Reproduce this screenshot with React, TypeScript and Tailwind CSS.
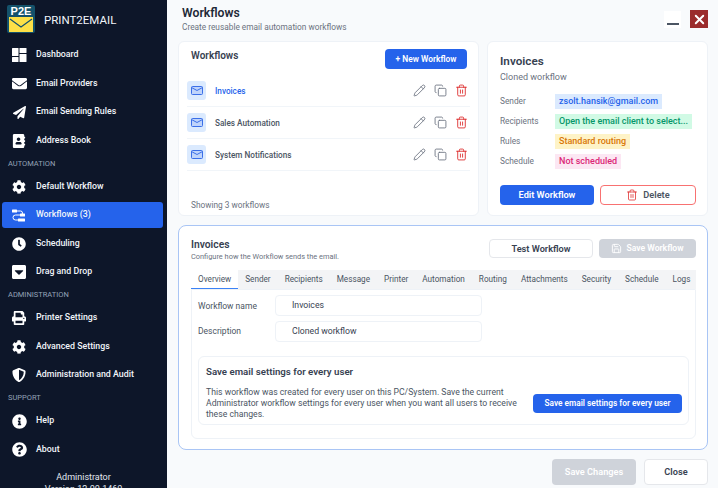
import { ReactNode } from "react";
import {
  FaAddressBook,
  FaCaretSquareDown,
  FaClock,
  FaCog,
  FaEnvelope,
  FaInfoCircle,
  FaPaperPlane,
  FaPrint,
  FaQuestionCircle,
  FaShieldAlt,
} from "react-icons/fa";
import { Copy, Pencil, Save, Trash2, X } from "lucide-react";

const DashboardIcon = () => (
  <svg width="15" height="14" viewBox="0 0 15 14" fill="#fff">
    <rect x="0" y="0" width="6.5" height="8" rx="0.5" />
    <rect x="0" y="9" width="6.5" height="5" rx="0.5" />
    <rect x="7.5" y="0" width="7" height="5" rx="0.5" />
    <rect x="7.5" y="6" width="7" height="8" rx="0.5" />
  </svg>
);

const FlowIcon = () => (
  <svg width="14" height="13" viewBox="0 0 14 13" fill="none">
    <rect x="0" y="0.5" width="5" height="3" rx="0.5" fill="#fff" />
    <rect x="8" y="4.5" width="5" height="3" rx="0.5" fill="#fff" />
    <rect x="6" y="9.5" width="7" height="3" rx="0.5" fill="#fff" />
    <path d="M5 2h3.5a1.5 1.5 0 0 1 0 4H3.5a2 2 0 0 0 0 5H6" stroke="#fff" strokeWidth="1" />
  </svg>
);

const groups: { label?: string; items: { icon: ReactNode; name: string; active?: boolean }[] }[] = [
  {
    items: [
      { icon: <DashboardIcon />, name: "Dashboard" },
      { icon: <FaEnvelope size={15} />, name: "Email Providers" },
      { icon: <FaPaperPlane size={13} />, name: "Email Sending Rules" },
      { icon: <FaAddressBook size={14} />, name: "Address Book" },
    ],
  },
  {
    label: "AUTOMATION",
    items: [
      { icon: <FaCog size={14} />, name: "Default Workflow" },
      { icon: <FlowIcon />, name: "Workflows (3)", active: true },
      { icon: <FaClock size={14} />, name: "Scheduling" },
      { icon: <FaCaretSquareDown size={16} />, name: "Drag and Drop" },
    ],
  },
  {
    label: "ADMINISTRATION",
    items: [
      { icon: <FaPrint size={14} />, name: "Printer Settings" },
      { icon: <FaCog size={14} />, name: "Advanced Settings" },
      { icon: <FaShieldAlt size={14} />, name: "Administration and Audit" },
    ],
  },
  {
    label: "SUPPORT",
    items: [
      { icon: <FaInfoCircle size={15} />, name: "Help" },
      { icon: <FaQuestionCircle size={15} />, name: "About" },
    ],
  },
];

const workflows = ["Invoices", "Sales Automation", "System Notifications"];

const details = [
  { label: "Sender", value: "zsolt.hansik@gmail.com", cls: "bg-[#dbeafe] text-[#2563eb]" },
  { label: "Recipients", value: "Open the email client to select...", cls: "bg-[#d1fae5] text-[#059669]" },
  { label: "Rules", value: "Standard routing", cls: "bg-[#fef3c7] text-[#d97706]" },
  { label: "Schedule", value: "Not scheduled", cls: "bg-[#fce7f3] text-[#db2777]" },
];

const tabs = ["Overview", "Sender", "Recipients", "Message", "Printer", "Automation", "Routing", "Attachments", "Security", "Schedule", "Logs"];

const Sidebar = () => (
  <aside className="w-[167px] h-[488px] shrink-0 overflow-hidden bg-[#0d1629] text-[#f1f5f9] flex flex-col">
    <div className="h-[38px] shrink-0 flex items-center pl-[7px] gap-[9px]">
      <div className="w-[28px] h-[28px] rounded-[2px] bg-[#14526b] flex flex-col items-center overflow-hidden">
        <span className="text-[11px] leading-[12px] font-bold text-white font-['Liberation_Sans',sans-serif]">P2E</span>
        <svg width="24" height="15" viewBox="0 0 24 15">
          <rect width="24" height="15" fill="#fde047" />
          <path d="M1 2l11 8 11-8" stroke="#14526b" strokeWidth="1.2" fill="none" />
        </svg>
      </div>
      <span className="text-[11.5px] pt-[4px]">PRINT2EMAIL</span>
    </div>
    <nav className="shrink-0 flex flex-col gap-[2.5px] pt-[4px]">
      {groups.map((g) => (
        <div key={g.label ?? "main"} className="flex flex-col gap-[2.5px]">
          {g.label && (
            <div className="h-[15px] flex items-center pl-[8px] text-[7.5px] text-[#94a3b8]">{g.label}</div>
          )}
          {g.items.map((item) => (
            <div
              key={item.name}
              className={`h-[26px] ml-[2px] mr-[4px] rounded-[3px] flex items-center ${item.active ? "bg-[#2563eb]" : ""}`}
            >
              <span className="w-[34px] flex justify-center text-white shrink-0">{item.icon}</span>
              <span className="text-[8.8px] font-medium whitespace-nowrap">{item.name}</span>
            </div>
          ))}
        </div>
      ))}
    </nav>
    <div className="shrink-0 pt-[8px] text-center text-[9px] leading-[12px] text-[#e2e8f0]">
      <div>Administrator</div>
      <div>Version 12.00.1460</div>
    </div>
  </aside>
);

const WorkflowList = () => (
  <section className="w-[301px] h-[175px] bg-white rounded-[6px] border border-[#eef2f7] px-[8px] flex flex-col">
    <div className="flex items-start justify-between pl-[4px] pr-[3px] pt-[7px] h-[28px]">
      <h2 className="text-[10px] leading-[14px] font-semibold text-[#374151]">Workflows</h2>
      <button className="w-[82px] h-[20px] rounded-[4px] bg-[#2563eb] text-white text-[8.4px] font-semibold">
        + New Workflow
      </button>
    </div>
    <div className="mt-[5px]">
      {workflows.map((w, i) => (
        <div key={w} className="h-[32px] border-b border-[#f1f5f9] flex items-center">
          <span className="w-[19px] h-[19px] rounded-[3px] bg-[#dbeafe] flex items-center justify-center">
            <svg width="12" height="9" viewBox="0 0 12 9" fill="none" stroke="#3b6fe8">
              <rect x="0.5" y="0.5" width="11" height="8" rx="1" fill="#bfd4fb" />
              <path d="M0.5 1.5l5.5 3 5.5-3" />
            </svg>
          </span>
          <span className={`ml-[9px] pt-[1px] text-[8.2px] font-medium ${i === 0 ? "text-[#2563eb]" : "text-[#4b5563]"}`}>{w}</span>
          <span className="ml-auto mr-[2px] flex items-center gap-[8px]">
            <Pencil size={13} strokeWidth={1.6} className="text-[#6b7280]" />
            <Copy size={13} strokeWidth={1.6} className="text-[#6b7280]" />
            <Trash2 size={13} strokeWidth={1.6} className="text-[#dc2626]" />
          </span>
        </div>
      ))}
    </div>
    <p className="mt-auto mb-[4px] pl-[4px] text-[8.3px] text-[#6b7280]">Showing 3 workflows</p>
  </section>
);

const WorkflowDetails = () => (
  <section className="flex-1 h-[175px] bg-white rounded-[6px] border border-[#eef2f7] pl-[12px] pr-[11px] pt-[12px]">
    <h2 className="text-[11.7px] leading-[14px] font-semibold text-[#374151]">Invoices</h2>
    <p className="mt-[3px] text-[9px] leading-[12px] text-[#6b7280]">Cloned workflow</p>
    <div className="mt-[11px] flex flex-col gap-[5px]">
      {details.map((d) => (
        <div key={d.label} className="h-[15px] flex items-center">
          <span className="w-[55px] text-[8.3px] text-[#6b7280]">{d.label}</span>
          <span className={`h-[15px] px-[4px] flex items-center text-[9px] font-medium whitespace-nowrap ${d.cls}`}>{d.value}</span>
        </div>
      ))}
    </div>
    <div className="mt-[16px] flex gap-[6px]">
      <button className="w-[94px] h-[20px] rounded-[4px] bg-[#2563eb] text-white text-[9.2px] font-semibold">Edit Workflow</button>
      <button className="w-[96px] h-[20px] rounded-[4px] border border-[#f87171] bg-white text-[#4b5563] text-[9.2px] font-semibold flex items-center justify-center gap-[5px]">
        <Trash2 size={12} strokeWidth={1.5} className="text-[#dc2626]" />
        Delete
      </button>
    </div>
  </section>
);

const Editor = () => (
  <section className="mt-[9px] h-[225px] bg-white rounded-[8px] border border-[#a9c5f5] pl-[12px] pr-[11px] pt-[13px]">
    <div className="flex items-start justify-between">
      <div>
        <h3 className="text-[10.3px] leading-[12px] font-semibold text-[#374151]">Invoices</h3>
        <p className="text-[7.4px] leading-[11px] text-[#6b7280]">Configure how the Workflow sends the email.</p>
      </div>
      <div className="flex gap-[6px]">
        <button className="w-[104px] h-[19px] rounded-[4px] border border-[#e5e7eb] bg-white text-[9.2px] font-semibold text-[#374151]">Test Workflow</button>
        <button className="w-[97px] h-[19px] rounded-[4px] bg-[#cfd3da] text-white text-[8.6px] font-semibold flex items-center justify-center gap-[4px]">
          <Save size={11} />
          Save Workflow
        </button>
      </div>
    </div>
    <div className="mt-[8px] flex h-[19px] bg-[#f3f4f6]">
      {tabs.map((t, i) => (
        <span
          key={t}
          className={`px-[7px] flex items-center text-[8.2px] whitespace-nowrap text-[#4b5563] ${i === 0 ? "bg-white border-b border-[#3b82f6]" : ""}`}
        >
          {t}
        </span>
      ))}
    </div>
    <div className="h-[150px] border border-[#eef2f7] rounded-b-[6px] px-[6px] pt-[5px]">
      <div className="flex items-center h-[21px]">
        <label className="w-[77px] pt-[1px] text-[8.5px] text-[#4b5563]">Workflow name</label>
        <div className="w-[207px] h-[21px] border border-[#eef2f7] rounded-[4px] pl-[16px] pt-[1px] flex items-center text-[8.7px] text-[#374151]">Invoices</div>
      </div>
      <div className="flex items-center h-[21px] mt-[5px]">
        <label className="w-[77px] text-[8.5px] text-[#4b5563]">Description</label>
        <div className="w-[207px] h-[21px] border border-[#eef2f7] rounded-[4px] pl-[16px] pt-[1px] flex items-center text-[8.7px] text-[#374151]">Cloned workflow</div>
      </div>
      <div className="mt-[14px] h-[69px] border border-[#eef2f7] rounded-[6px] pl-[7px] pr-[6px] pt-[8px]">
        <h4 className="text-[9.7px] leading-[13px] font-semibold text-[#374151]">Save email settings for every user</h4>
        <div className="mt-[9px] flex items-center justify-between">
          <p className="w-[318px] text-[8.66px] leading-[11px] text-[#4b5563]">
            This workflow was created for every user on this PC/System. Save the current Administrator workflow settings for every user when you want all users to receive these changes.
          </p>
          <button className="w-[149px] h-[19px] rounded-[4px] bg-[#2563eb] text-white text-[8.3px] font-semibold">Save email settings for every user</button>
        </div>
      </div>
    </div>
  </section>
);

const App = () => {
  return (
    <div className="w-[718px] h-[488px] overflow-hidden flex bg-[#f8fafc] font-['Roboto',sans-serif]">
      <Sidebar />
      <main className="flex-1 min-w-0 pl-[11px] pr-[10px]">
        <header className="h-[41px] flex items-start justify-between">
          <div className="pl-[4px] pt-[6px]">
            <h1 className="text-[12.2px] leading-[15px] font-semibold text-[#1f2937]">Workflows</h1>
            <p className="text-[8.3px] leading-[12px] text-[#6b7280]">Create reusable email automation workflows</p>
          </div>
          <div className="flex items-center gap-[9px] pt-[10px]">
            <span className="w-[17px] h-[17px] bg-white flex items-end justify-center pb-[3px]">
              <span className="w-[12px] h-[2px] bg-[#4b5563]" />
            </span>
            <span className="w-[18px] h-[18px] bg-[#9b2c2c] flex items-center justify-center">
              <X size={15} strokeWidth={3} className="text-white" />
            </span>
          </div>
        </header>
        <div className="flex gap-[8px]">
          <WorkflowList />
          <WorkflowDetails />
        </div>
        <Editor />
        <div className="mt-[9px] flex justify-end gap-[8px]">
          <button className="w-[84px] h-[26px] rounded-[4px] bg-[#cfd3da] text-white text-[9.2px] font-semibold">Save Changes</button>
          <button className="w-[64px] h-[26px] rounded-[4px] border border-[#e5e7eb] bg-white text-[#374151] text-[9.2px] font-semibold">Close</button>
        </div>
      </main>
    </div>
  );
};

export default App;
